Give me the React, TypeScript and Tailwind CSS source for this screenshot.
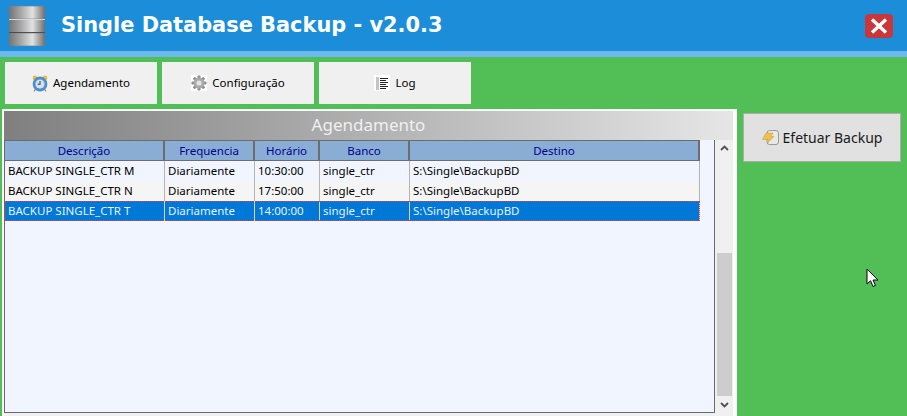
import React from 'react';

const columns = [
  { title: 'Descrição', width: 'w-[160px]' },
  { title: 'Frequencia', width: 'w-[90px]' },
  { title: 'Horário', width: 'w-[65px]' },
  { title: 'Banco', width: 'w-[90px]' },
  { title: 'Destino', width: 'w-[290px]' },
];

const rows = [
  ['BACKUP SINGLE_CTR M', 'Diariamente', '10:30:00', 'single_ctr', 'S:\\Single\\BackupBD'],
  ['BACKUP SINGLE_CTR N', 'Diariamente', '17:50:00', 'single_ctr', 'S:\\Single\\BackupBD'],
  ['BACKUP SINGLE_CTR T', 'Diariamente', '14:00:00', 'single_ctr', 'S:\\Single\\BackupBD'],
];

const DbIcon = () => (
  <svg width="38" height="42" viewBox="0 0 38 42">
    <defs>
      <linearGradient id="metal" x1="0" x2="1" y1="0" y2="0">
        <stop offset="0" stopColor="#747474" />
        <stop offset="0.3" stopColor="#a2a2a2" />
        <stop offset="0.65" stopColor="#e2e2e2" />
        <stop offset="1" stopColor="#6e6e6e" />
      </linearGradient>
    </defs>
    <rect x="1" y="1" width="36" height="13" rx="1" fill="url(#metal)" stroke="#5f7f99" strokeWidth="0.6" />
    <rect x="1" y="15" width="36" height="12" fill="url(#metal)" />
    <rect x="1" y="28" width="36" height="13" rx="1" fill="url(#metal)" stroke="#5f7f99" strokeWidth="0.6" />
    <rect x="1" y="14" width="36" height="1" fill="#d8d8d8" />
    <rect x="1" y="27" width="36" height="1" fill="#4e4e4e" />
  </svg>
);

const ClockIcon = () => (
  <svg width="16" height="17" viewBox="0 0 16 17">
    <circle cx="3" cy="3" r="2.4" fill="#eebb4d" />
    <circle cx="13" cy="3" r="2.4" fill="#eebb4d" />
    <path d="M3.5 14 L2 16.5 M12.5 14 L14 16.5" stroke="#8a8a8a" strokeWidth="1.2" />
    <circle cx="8" cy="9" r="7.4" fill="#4f8fc9" />
    <circle cx="8" cy="9" r="4.6" fill="#cfe2f2" />
    <path d="M8 6 V9.3 H5.6" stroke="#3a4a5a" strokeWidth="1.1" fill="none" />
  </svg>
);

const GearIcon = () => (
  <svg width="16" height="16" viewBox="0 0 16 16">
    <rect width="16" height="16" fill="#ffffff" />
    <g fill="#8f8f8f">
      <rect x="6.5" y="0.5" width="3" height="15" rx="0.8" />
      <rect x="6.5" y="0.5" width="3" height="15" rx="0.8" transform="rotate(45 8 8)" />
      <rect x="6.5" y="0.5" width="3" height="15" rx="0.8" transform="rotate(90 8 8)" />
      <rect x="6.5" y="0.5" width="3" height="15" rx="0.8" transform="rotate(135 8 8)" />
    </g>
    <circle cx="8" cy="8" r="5.4" fill="#a9a9a9" />
    <circle cx="8" cy="8" r="2.6" fill="#e4e4e4" />
  </svg>
);

const LogIcon = () => (
  <svg width="16" height="16" viewBox="0 0 16 16">
    <rect width="16" height="16" fill="#ffffff" />
    <rect x="2" y="2" width="3" height="13" fill="#c4c4c4" />
    <path d="M6 3.5 H14 M6 5.5 H12 M6 7.5 H14 M6 9.5 H12 M6 11.5 H14 M6 13.5 H12" stroke="#222222" strokeWidth="1" />
  </svg>
);

const BackupIcon = () => (
  <svg width="17" height="16" viewBox="0 0 17 16">
    <rect x="5" y="0.5" width="11.5" height="14" rx="2.5" fill="#e8e8e8" stroke="#9a9a9a" />
    <path d="M4 3 H11 L9 6.5 H12 L5.5 13 L6.5 9.5 H0.5 Z" fill="#eec14f" stroke="#c79a2e" strokeWidth="0.5" />
  </svg>
);

const TopButton = ({ icon, label }: { icon: React.ReactNode; label: string }) => (
  <button className="w-[152px] h-[42px] bg-[#f0f0f0] flex items-center justify-center gap-[5px] text-[11.5px] text-black">
    {icon}
    <span>{label}</span>
  </button>
);

export default function App() {
  return (
    <div className="relative w-[907px] h-[416px] overflow-hidden bg-[#52be56] font-['Noto_Sans',sans-serif]">
      {/* Header */}
      <div className="h-[51px] bg-[#1c8ed9] flex items-center pl-[8px] pr-[14px]">
        <DbIcon />
        <h1 className="ml-[15px] text-[20.9px] font-bold text-white font-['DejaVu_Sans',sans-serif]">
          Single Database Backup - v2.0.3
        </h1>
        <div className="ml-auto w-[28px] h-[24px] rounded-[4px] bg-[#c9373a] flex items-center justify-center">
          <svg width="18" height="16" viewBox="0 0 18 16">
            <path d="M2 1.5 L16 14.5 M16 1.5 L2 14.5" stroke="#ffffff" strokeWidth="3.4" />
          </svg>
        </div>
      </div>
      <div className="h-[6px] bg-[#6db9ee]" />

      {/* Tabs */}
      <div className="flex gap-[5px] pl-[5px] pt-[5px]">
        <TopButton icon={<ClockIcon />} label="Agendamento" />
        <TopButton icon={<GearIcon />} label="Configuração" />
        <TopButton icon={<LogIcon />} label="Log" />
      </div>

      <div className="flex pl-[2px] pt-[5px] items-start">
        {/* Panel */}
        <div className="w-[735px] h-[312px] bg-[#f0f0f0] border-2 border-r-4 border-white border-b-0 flex flex-col">
          <div className="h-[29px] shrink-0 pb-px bg-gradient-to-r from-[#7f7f7f] to-[#e6e6e6] flex items-center justify-center text-[17px] text-[#f0f0f0]">
            Agendamento
          </div>
          <div className="flex h-[273px]">
            {/* Grid */}
            <div className="w-[712px] bg-[#f1f5ff] border border-[#696969] border-t-0 text-[11.5px] leading-[19px]">
              <div className="flex h-[21px] bg-[#8aadd6] border-y border-[#6d6d6d] w-[695px] text-[#00008b]">
                {columns.map((c) => (
                  <div key={c.title} className={`${c.width} border-r-2 border-[#6d6d6d] text-center`}>
                    {c.title}
                  </div>
                ))}
              </div>
              {rows.map((row, i) => (
                <div
                  key={row[0]}
                  className={
                    i === 2
                      ? 'flex h-[20px] w-[695px] bg-[#0078d7] text-[#e8f1fa] outline-1 outline-dotted -outline-offset-1 outline-[#e2403f]'
                      : i === 1
                        ? 'flex h-[20px] w-[695px] bg-[#f5f5f5] text-black'
                        : 'flex h-[20px] w-[695px] bg-[#f1f5ff] text-black'
                  }
                >
                  {row.map((cell, j) => (
                    <div
                      key={j}
                      className={`${columns[j].width} border-r ${i === 2 ? 'border-[#f0c9a8]' : 'border-[#b4b4b4]'} pl-[3px] whitespace-nowrap`}
                    >
                      {cell}
                    </div>
                  ))}
                </div>
              ))}
            </div>
            {/* Scrollbar */}
            <div className="w-[18px] flex flex-col items-center bg-[#f0f0f0]">
              <div className="h-[17px] flex items-center justify-center">
                <svg width="9" height="6" viewBox="0 0 9 6">
                  <path d="M1 5 L4.5 1.5 L8 5" stroke="#505050" strokeWidth="1.8" fill="none" />
                </svg>
              </div>
              <div className="mt-[96px] w-[15px] h-[144px] bg-[#cdcdcd]" />
              <div className="h-[17px] flex items-center justify-center">
                <svg width="9" height="6" viewBox="0 0 9 6">
                  <path d="M1 1 L4.5 4.5 L8 1" stroke="#505050" strokeWidth="1.8" fill="none" />
                </svg>
              </div>
            </div>
          </div>
        </div>

        {/* Backup button */}
        <button className="ml-[6px] mt-[4px] w-[158px] h-[49px] bg-[#e1e1e1] border border-[#adadad] flex items-center justify-center gap-[4px] text-[14px] text-[#1a1a1a]">
          <BackupIcon />
          <span>Efetuar Backup</span>
        </button>
      </div>

      {/* Mouse cursor */}
      <svg className="absolute left-[866px] top-[268px]" width="13" height="20" viewBox="0 0 13 20">
        <path d="M1 1 V16 L4.5 12.8 L7 18.5 L9.5 17.4 L7 12 H12 Z" fill="#ffffff" stroke="#000000" strokeWidth="1" />
      </svg>
    </div>
  );
}
